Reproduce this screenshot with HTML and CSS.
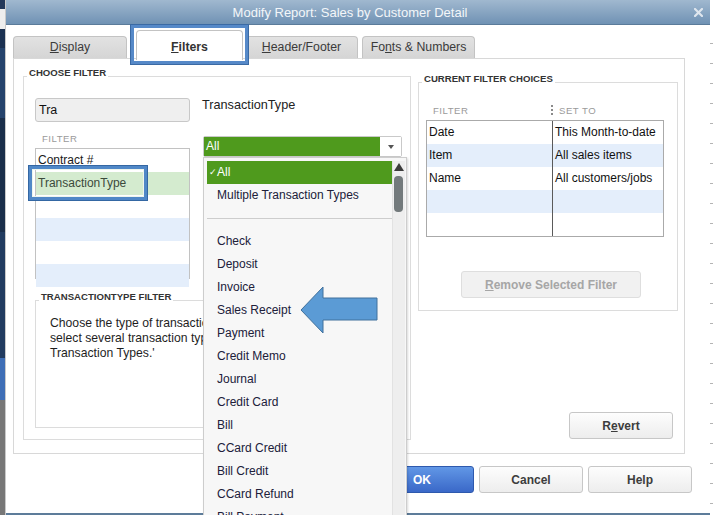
FILE: index.html
```html
<!DOCTYPE html>
<html lang="en">
<head>
    <meta charset="UTF-8">
    <meta name="viewport" content="width=device-width, initial-scale=1.0">
    <title>Modify Report: Sales by Customer Detail</title>
    <link rel="stylesheet" href="styles.css">
</head>
<body>
    <!-- Desktop behind the dialog -->
    <div class="desktop"></div>

    <div class="dialog">
        <div class="titlebar">
            <span class="title">Modify Report: Sales by Customer Detail</span>
            <svg class="close" viewBox="0 0 9 9"><path d="M1 1L8 8M8 1L1 8" stroke="#dfe6ee" stroke-width="2.2" stroke-linecap="square"/></svg>
        </div>

        <div class="dialog-body">
            <div class="tabs">
                <div class="tab tab-display"><u>D</u>isplay</div>
                <div class="tab tab-active"><u>F</u>ilters</div>
                <div class="tab tab-header"><u>H</u>eader/Footer</div>
                <div class="tab">Fo<u>n</u>ts &amp; Numbers</div>
            </div>

            <div class="panel">
                <!-- Choose filter -->
                <div class="group choose">
                    <div class="group-title">CHOOSE FILTER</div>
                    <div class="choose-top">
                        <div class="filter-col">
                            <div class="search">Tra</div>
                            <div class="col-head">FILTER</div>
                            <div class="filter-list">
                                <div class="row">Contract #</div>
                                <div class="row row-sel">TransactionType<span class="callout"></span></div>
                                <div class="row"></div>
                                <div class="row row-alt"></div>
                                <div class="row"></div>
                                <div class="row row-alt"></div>
                            </div>
                        </div>
                        <div class="value-col">
                            <div class="value-label">TransactionType</div>
                            <div class="combo">
                                <div class="combo-value">All</div>
                                <div class="combo-btn"><span class="caret"></span></div>

                                <!-- Open list -->
                                <div class="dropdown">
                                    <div class="dd-item dd-sel"><span class="check">✓</span>All</div>
                                    <div class="dd-item">Multiple Transaction Types</div>
                                    <div class="dd-sep"></div>
                                    <div class="dd-item">Check</div>
                                    <div class="dd-item">Deposit</div>
                                    <div class="dd-item">Invoice</div>
                                    <div class="dd-item">Sales Receipt</div>
                                    <div class="dd-item">Payment</div>
                                    <div class="dd-item">Credit Memo</div>
                                    <div class="dd-item">Journal</div>
                                    <div class="dd-item">Credit Card</div>
                                    <div class="dd-item">Bill</div>
                                    <div class="dd-item">CCard Credit</div>
                                    <div class="dd-item">Bill Credit</div>
                                    <div class="dd-item">CCard Refund</div>
                                    <div class="dd-item">Bill Payment</div>
                                    <div class="dd-scroll">
                                        <div class="scroll-up"></div>
                                        <div class="scroll-thumb"></div>
                                    </div>
                                    <svg class="pointer" width="78" height="48" viewBox="0 0 78 48">
                                        <polygon points="1,24 23,1 23,12 77,12 77,34 23,34 23,47" fill="#5b9bd5" stroke="#41719c" stroke-width="1"/>
                                    </svg>
                                </div>
                            </div>
                        </div>
                    </div>

                    <div class="group tt-group">
                        <div class="group-title">TRANSACTIONTYPE FILTER</div>
                        <p class="help-text">Choose the type of transaction. To<br>select several transaction types, choose 'Multiple<br>Transaction Types.'</p>
                    </div>
                </div>

                <!-- Current filter choices -->
                <div class="side">
                    <div class="group current">
                        <div class="group-title">CURRENT FILTER CHOICES</div>
                        <div class="current-head">
                            <span class="head-filter">FILTER</span>
                            <span class="divider-dots"></span>
                            <span class="head-set">SET TO</span>
                        </div>
                        <div class="choices">
                            <div class="cell cell-l">Date</div>
                            <div class="cell">This Month-to-date</div>
                            <div class="cell cell-l alt">Item</div>
                            <div class="cell alt">All sales items</div>
                            <div class="cell cell-l">Name</div>
                            <div class="cell">All customers/jobs</div>
                            <div class="cell cell-l alt"></div>
                            <div class="cell alt"></div>
                            <div class="cell cell-l"></div>
                            <div class="cell"></div>
                        </div>
                        <button class="btn btn-remove"><u>R</u>emove Selected Filter</button>
                    </div>
                    <button class="btn btn-revert">R<u>e</u>vert</button>
                </div>
            </div>

            <div class="actions">
                <button class="btn btn-ok">OK</button>
                <button class="btn">Cancel</button>
                <button class="btn">Help</button>
            </div>
        </div>
    </div>

    <div class="edge"></div>
</body>
</html>
```

FILE: styles.css
```css
* {
    box-sizing: border-box;
}

body {
    margin: 0;
    width: 713px;
    height: 515px;
    display: flex;
    overflow: hidden;
    background: #fff;
    font-family: "Liberation Sans", Arial, sans-serif;
    font-size: 12px;
    color: #222;
}

/* Desktop strip on the left */
.desktop {
    width: 6px;
    border-right: 1px solid #c9c9c9;
    background: linear-gradient(to bottom,
        #24395a 0, #24395a 9px,
        #eeeeee 9px, #eeeeee 29px,
        #1b3152 29px, #1b3152 48px,
        #25436c 48px, #25436c 118px,
        #1a2e4a 118px, #1a2e4a 232px,
        #213b60 232px, #213b60 358px,
        #3e6eb6 358px, #3e6eb6 400px,
        #777 400px);
}

/* Right strip with tick marks */
.edge {
    width: 3px;
    padding-top: 43px;
    background-color: #fff;
    background-image: repeating-linear-gradient(to bottom, #b4b4b4 0, #b4b4b4 1px, transparent 1px, transparent 20px);
    background-origin: content-box;
    background-clip: content-box;
}

.dialog {
    width: 704px;
    display: flex;
    flex-direction: column;
}

.titlebar {
    height: 25px;
    display: flex;
    align-items: center;
    background: linear-gradient(#a0b8cf, #7092b4);
    border-bottom: 1px solid #5b7b9a;
    color: #f3f6f9;
    font-size: 13px;
}

.title {
    flex: 1;
    text-align: center;
}

.close {
    width: 9px;
    height: 9px;
    margin-right: 7px;
}

.dialog-body {
    flex: 1;
    padding-top: 5px;
    border-bottom: 2px solid #5d7c9a;
}

/* Tabs */
.tabs {
    display: flex;
    align-items: flex-end;
    height: 28px;
    margin-left: 7px;
}

.tab {
    width: 113px;
    height: 22px;
    border: 1px solid #c3c3c3;
    border-bottom: 0;
    border-radius: 4px 4px 0 0;
    background: linear-gradient(#e2e2e2, #d5d5d5);
    text-align: center;
    line-height: 20px;
    font-size: 12.3px;
    color: #3b3b3b;
}

.tab-display {
    width: 114px;
    margin-right: 9px;
}

.tab-active {
    position: relative;
    z-index: 2;
    width: 107px;
    height: 30px;
    margin-bottom: -2px;
    margin-right: 2px;
    padding-top: 6px;
    background: #fff;
    font-weight: bold;
    color: #333;
}

.tab-active::after {
    content: "";
    position: absolute;
    left: -6px;
    right: -6px;
    top: -6px;
    bottom: -4px;
    border: 3px solid #5689c8;
    box-shadow: 0 0 0 1px #3b6aa4;
}

.tab-header {
    margin-right: 4px;
}

/* Tab page */
.panel {
    display: flex;
    width: 672px;
    height: 396px;
    margin-left: 7px;
    padding: 17px 0 0 9px;
    border: 1px solid #d8d8d8;
}

.group {
    border: 1px solid #dcdcdc;
}

.group-title {
    width: fit-content;
    margin: -9px 0 0 3px;
    padding: 0 2px;
    background: #fff;
    font-size: 9.6px;
    line-height: 10px;
    font-weight: bold;
    color: #333;
}

.choose {
    flex: none;
    width: 388px;
    height: 364px;
}

.choose-top {
    display: flex;
    padding-left: 11px;
}

.filter-col {
    width: 155px;
}

.search {
    height: 24px;
    margin-top: 20px;
    padding-left: 3px;
    background: #efefef;
    border: 1px solid #c8c8c8;
    border-radius: 3px;
    line-height: 22px;
    font-size: 12.5px;
    color: #111;
}

.col-head {
    height: 12px;
    margin: 11px 0 3px 7px;
    line-height: 12px;
    font-size: 9.6px;
    letter-spacing: 0.5px;
    color: #9a9a9a;
}

.filter-list {
    height: 131px;
    border: 1px solid #c2c2c2;
}

.row {
    height: 23px;
    padding-left: 2px;
    line-height: 23px;
    color: #1a1a1a;
}

.row-sel {
    position: relative;
    background: #d4ebcf;
    color: #3b4a3b;
}

.row-alt {
    background: #e4eefb;
}

/* Highlight box drawn over the list */
.callout {
    position: absolute;
    left: -7px;
    top: -6px;
    width: 118px;
    height: 34px;
    border: 3px solid #5088c7;
    box-shadow: 0 0 0 1px #3467a3, inset 0 0 0 1px #eef5ee;
}

.value-col {
    margin-left: 12px;
}

.value-label {
    margin-top: 20px;
    font-size: 12.7px;
    line-height: 15px;
    color: #222;
}

.combo {
    position: relative;
    display: flex;
    width: 199px;
    height: 21px;
    margin: 23px 0 0 1px;
    border: 1px solid #c9c9c9;
    border-radius: 2px;
}

.combo-value {
    flex: 1;
    padding-left: 2px;
    background: #4f9a1d;
    color: #fff;
    line-height: 19px;
}

.combo-btn {
    width: 21px;
    display: flex;
    align-items: center;
    justify-content: center;
    background: #fff;
}

.caret {
    border-left: 3.5px solid transparent;
    border-right: 3.5px solid transparent;
    border-top: 4px solid #555;
}

/* Open dropdown list */
.dropdown {
    position: absolute;
    z-index: 10;
    left: -1px;
    top: 20px;
    width: 204px;
    height: 362px;
    padding: 3px 0 0 3px;
    background: #f7f7f7;
    border: 1px solid #cdcdcd;
    box-shadow: 1px 1px 2px rgba(0, 0, 0, 0.15);
}

.dd-item {
    width: 185px;
    height: 23px;
    padding-left: 10px;
    line-height: 23px;
    white-space: nowrap;
    color: #20203a;
}

.dd-sel {
    position: relative;
    background: #4f9a1d;
    color: #fff;
}

.check {
    position: absolute;
    left: 2px;
    font-family: "DejaVu Sans", sans-serif;
    font-size: 9px;
}

.dd-sep {
    width: 185px;
    margin: 11px 0;
    border-top: 1px solid #cdcdcd;
}

.dd-scroll {
    position: absolute;
    top: 3px;
    right: 1px;
    bottom: 0;
    width: 13px;
    background: #eeeeee;
    border-left: 1px solid #e2e2e2;
}

.scroll-up {
    width: 0;
    height: 0;
    margin: 2px auto 0;
    border-left: 5px solid transparent;
    border-right: 5px solid transparent;
    border-bottom: 8px solid #3c3c3c;
}

.scroll-thumb {
    width: 9px;
    height: 36px;
    margin: 5px 0 0 1px;
    border-radius: 4px;
    background: #737a7c;
}

.pointer {
    position: absolute;
    left: 96px;
    top: 128px;
}

.tt-group {
    height: 128px;
    margin: 21px 10px 0 11px;
}

.help-text {
    margin: 13.5px 0 0 14px;
    font-size: 12.2px;
    line-height: 15px;
    white-space: nowrap;
    color: #1e1e1e;
}

/* Right column */
.side {
    display: flex;
    flex-direction: column;
    width: 260px;
    margin-left: 7px;
    padding-bottom: 14px;
}

.current {
    height: 229px;
    margin-top: 6px;
}

.current-head {
    display: flex;
    align-items: center;
    height: 12px;
    margin-top: 20px;
    padding-left: 14px;
    font-size: 9.6px;
    letter-spacing: 0.5px;
    color: #9a9a9a;
}

.head-filter {
    width: 118px;
}

.divider-dots {
    height: 10px;
    border-left: 2px dotted #8a8a8a;
}

.head-set {
    margin-left: 6px;
}

.choices {
    display: grid;
    grid-template-columns: 126px 1fr;
    width: 238px;
    margin: 4px 0 0 7px;
    border: 1px solid #aaaaaa;
}

.cell {
    height: 23px;
    padding-left: 2px;
    line-height: 23px;
    white-space: nowrap;
    color: #111;
}

.cell-l {
    border-right: 1px solid #5a5a5a;
}

.alt {
    background: #e4eefb;
}

/* Buttons */
.btn {
    width: 104px;
    height: 27px;
    padding: 0;
    border: 1px solid #c7c7c7;
    border-radius: 3px;
    background: linear-gradient(#fdfdfd, #ededed);
    font-family: inherit;
    font-size: 12px;
    font-weight: bold;
    color: #3d3d3d;
}

.btn-remove {
    width: 180px;
    margin: 34px 0 0 42px;
    background: #f1f1f1;
    border-color: #dedede;
    color: #a6a6a6;
}

.btn-revert {
    margin-top: auto;
    margin-right: 5px;
    align-self: flex-end;
}

.btn-ok {
    background: linear-gradient(#6197e6, #3a68c8);
    border-color: #2e59ad;
    color: #fff;
}

.actions {
    display: flex;
    justify-content: flex-end;
    gap: 5px;
    margin-top: 12px;
    padding-right: 18px;
}
```
